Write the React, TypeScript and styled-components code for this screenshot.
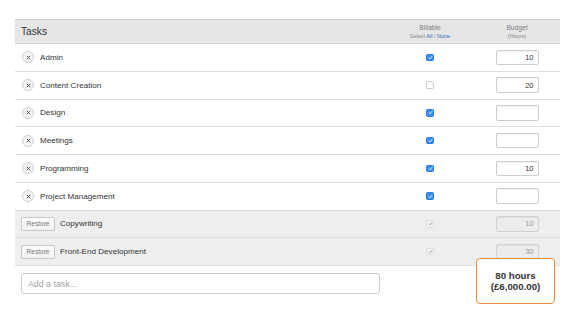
import React from 'react';
import styled, { createGlobalStyle } from 'styled-components';

const GlobalStyle = createGlobalStyle`
  html, body { margin: 0; padding: 0; background: #fff; }
  body { font-family: "Liberation Sans", Arial, sans-serif; color: #333; }
`;

const Page = styled.div`
  box-sizing: border-box;
  min-height: 325px;
  padding: 19px 20px 0 15px;
  width: 580px;
`;

const Table = styled.div`
  display: flex; flex-direction: column;
`;

const Row = styled.div<{ $head?: boolean; $archived?: boolean }>`
  display: grid; grid-template-columns: 1fr 88px 86px; align-items: center;
  box-sizing: border-box;
  height: ${p => (p.$head ? '25px' : '27.75px')};
  background: ${p => (p.$head ? '#e6e6e6' : p.$archived ? '#eeeeee' : '#fff')};
  border-top: ${p => (p.$head ? '1px solid #cfcfcf' : 'none')};
  border-bottom: 1px solid ${p => (p.$head ? '#d6d6d6' : '#dedede')};
`;

const HeadTitle = styled.div`
  padding-left: 6px; font-size: 10.2px; color: #333;
`;

const HeadCol = styled.div`
  display: flex; flex-direction: column; align-items: center; gap: 1px;
  color: #808080; font-size: 6.7px; line-height: 8px;
`;

const SubLabel = styled.span`
  font-size: 5.5px; line-height: 7px; color: #888;
  a { color: #2f6db5; text-decoration: none; }
`;

const NameCell = styled.div`
  display: flex; align-items: center; gap: 6px; padding-left: 7px;
  font-size: 8.1px; color: #333;
`;

const RemoveIcon = styled.span`
  display: inline-flex; align-items: center; justify-content: center;
  width: 10px; height: 10px; border-radius: 50%;
  border: 1px solid #cfcfcf; background: #f7f7f7;
  svg { display: block; }
`;

const RestoreButton = styled.button`
  height: 14px; width: 34px; padding: 0; box-sizing: border-box;
  margin-left: -1px; margin-right: -1px;
  font-family: "Liberation Sans", Arial, sans-serif; font-size: 6.6px; color: #777;
  border: 1px solid #c8c8c8; border-radius: 2px;
  background: linear-gradient(#fdfdfd, #f1f1f1);
`;

const CheckCell = styled.div`
  display: flex; justify-content: center;
`;

const Check = styled.span<{ $on?: boolean; $disabled?: boolean }>`
  display: inline-flex; align-items: center; justify-content: center;
  box-sizing: border-box; width: 7.5px; height: 7.5px; border-radius: 1.5px;
  background: ${p => (p.$disabled ? '#f3f3f3' : p.$on ? '#3b8cf2' : '#fff')};
  border: 1px solid ${p => (p.$disabled ? '#dcdcdc' : p.$on ? '#2f7de0' : '#c9c9c9')};
`;

const BudgetCell = styled.div`
  display: flex; justify-content: center;
`;

const BudgetInput = styled.div<{ $disabled?: boolean }>`
  box-sizing: border-box; width: 43px; height: 15.5px; padding-right: 4px;
  display: flex; align-items: center; justify-content: flex-end;
  font-size: 7.5px; color: ${p => (p.$disabled ? '#999' : '#333')};
  background: ${p => (p.$disabled ? '#ececec' : '#fff')};
  border: 1px solid ${p => (p.$disabled ? '#d2d2d2' : '#cdcdcd')}; border-radius: 2px;
  box-shadow: inset 0 1px 1px rgba(0, 0, 0, 0.05);
`;

const Footer = styled.div`
  position: relative; padding: 7px 0 12px 6px;
`;

const AddInput = styled.input`
  display: block;
  box-sizing: border-box; width: 359px; height: 21px; padding: 0 6px;
  border: 1px solid #cbcbcb; border-radius: 3px; outline: none;
  font-family: "Liberation Sans", Arial, sans-serif; font-size: 8.8px; color: #333;
  &::placeholder { color: #a2a2a2; }
`;

const TotalBox = styled.div`
  position: absolute; top: -8px; right: 5px;
  box-sizing: border-box; width: 79px; height: 46px;
  display: flex; flex-direction: column; align-items: center; justify-content: center;
  background: #fff; border: 1.5px solid #f2883d; border-radius: 4px;
  font-size: 9.7px; font-weight: bold; line-height: 11px; color: #333;
`;

type Task = { name: string; billable: boolean; budget?: string; archived?: boolean };

const tasks: Task[] = [
  { name: 'Admin', billable: true, budget: '10' },
  { name: 'Content Creation', billable: false, budget: '20' },
  { name: 'Design', billable: true },
  { name: 'Meetings', billable: true },
  { name: 'Programming', billable: true, budget: '10' },
  { name: 'Project Management', billable: true },
  { name: 'Copywriting', billable: true, budget: '10', archived: true },
  { name: 'Front-End Development', billable: true, budget: '30', archived: true },
];

const Tick = ({ color }: { color: string }) => (
  <svg width="5" height="5" viewBox="0 0 10 10">
    <path d="M2 5.5 L4.2 7.8 L8.2 2.5" fill="none" stroke={color} strokeWidth="1.6" strokeLinecap="round" strokeLinejoin="round" />
  </svg>
);

const Cross = () => (
  <svg width="5" height="5" viewBox="0 0 10 10">
    <path d="M2 2 L8 8 M8 2 L2 8" stroke="#444" strokeWidth="1.8" strokeLinecap="round" />
  </svg>
);

export default function App() {
  return (
    <>
      <GlobalStyle />
      <Page>
        <Table>
          <Row $head>
            <HeadTitle>Tasks</HeadTitle>
            <HeadCol>
              Billable
              <SubLabel>Select <a href="#">All</a> / <a href="#">None</a></SubLabel>
            </HeadCol>
            <HeadCol>
              Budget
              <SubLabel>(Hours)</SubLabel>
            </HeadCol>
          </Row>
          {tasks.map(t => (
            <Row key={t.name} $archived={t.archived}>
              <NameCell>
                {t.archived ? (
                  <RestoreButton>Restore</RestoreButton>
                ) : (
                  <RemoveIcon><Cross /></RemoveIcon>
                )}
                {t.name}
              </NameCell>
              <CheckCell>
                <Check $on={t.billable} $disabled={t.archived}>
                  {t.billable && <Tick color={t.archived ? '#9a9a9a' : '#fff'} />}
                </Check>
              </CheckCell>
              <BudgetCell>
                <BudgetInput $disabled={t.archived}>{t.budget}</BudgetInput>
              </BudgetCell>
            </Row>
          ))}
        </Table>
        <Footer>
          <AddInput placeholder="Add a task..." />
          <TotalBox>
            <span>80 hours</span>
            <span>(£6,000.00)</span>
          </TotalBox>
        </Footer>
      </Page>
    </>
  );
}
